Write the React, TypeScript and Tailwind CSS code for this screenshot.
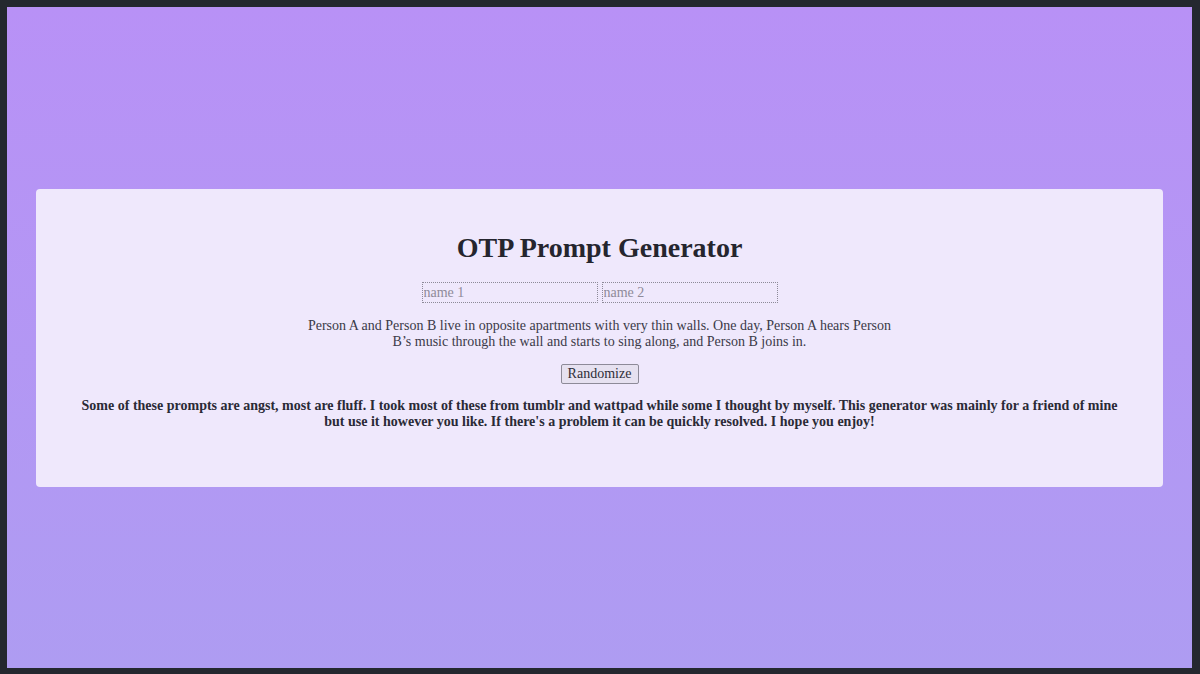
import React, { useState } from 'react';

const prompts = [
  'Person A and Person B live in opposite apartments with very thin walls. One day, Person A hears Person B\u2019s music through the wall and starts to sing along, and Person B joins in.',
];

export default function App() {
  const [name1, setName1] = useState('');
  const [name2, setName2] = useState('');
  const [prompt, setPrompt] = useState(prompts[0]);

  return (
    <div className="h-[674px] w-[1200px] bg-[#24282f] pt-[7px] pl-[7px] pr-[8px] pb-[6px] font-['Liberation_Serif',serif]">
      <div className="flex h-full w-full items-center justify-center bg-gradient-to-b from-[#b891f6] to-[#ae9cf2]">
        {/* Card */}
        <div className="flex w-[1127px] flex-col items-center rounded-[4px] bg-[#efe8fc] px-10 pt-[43px] pb-[57px] text-center">
          <h1 className="text-[28px] font-bold leading-[32px] text-[#25252e]">OTP Prompt Generator</h1>

          <div className="mt-[18px] flex gap-[4px]">
            <input
              value={name1}
              onChange={(e) => setName1(e.target.value)}
              placeholder="name 1"
              className="h-[21px] w-[176px] border border-dotted border-[#8d8a98] bg-transparent px-[1px] text-[14px] text-[#333] placeholder:text-[#8e8a99] outline-none"
            />
            <input
              value={name2}
              onChange={(e) => setName2(e.target.value)}
              placeholder="name 2"
              className="h-[21px] w-[176px] border border-dotted border-[#8d8a98] bg-transparent px-[1px] text-[14px] text-[#333] placeholder:text-[#8e8a99] outline-none"
            />
          </div>

          <p className="mt-[15px] max-w-[600px] text-[14px] leading-[16px] text-[#3b3a48]">{prompt}</p>

          <button
            onClick={() => setPrompt(prompts[Math.floor(Math.random() * prompts.length)])}
            className="mt-[14px] h-[20px] w-[78px] rounded-[2px] border border-[#8d8a98] bg-[#e6e1f0] text-[14px] leading-[18px] text-[#2e2e38]"
          >
            Randomize
          </button>

          <p className="mt-[14px] max-w-[1050px] text-[14px] font-bold leading-[16px] text-[#2a2a36]">
            Some of these prompts are angst, most are fluff. I took most of these from tumblr and wattpad while some I thought by myself. This generator was mainly for a friend of mine but use it however you like. If there's a problem it can be quickly resolved. I hope you enjoy!
          </p>
        </div>
      </div>
    </div>
  );
}
